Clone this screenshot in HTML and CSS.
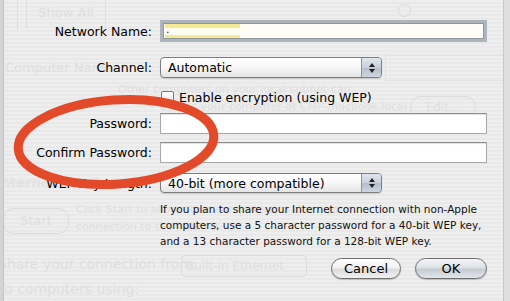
FILE: index.html
```html
<!DOCTYPE html>
<html>
<head>
<meta charset="utf-8">
<link rel="stylesheet" href="styles.css">
</head>
<body>
<div class="screen">
  <div class="behind">
    <div class="tb-sep tb-sep1"></div>
    <div class="tb-btn">Show All</div>
    <div class="tb-search"></div>
    <div class="bg-t cname">Computer Name:</div>
    <div class="bg-box cfield"></div>
    <div class="bg-t other">Other computers on your local subnet can</div>
    <div class="bg-t local">access your computer at CMP-macbook.local</div>
    <div class="bg-btn edit">Edit...</div>
    <div class="bg-t inet">Internet Sharing</div>
    <div class="bg-btn start">Start</div>
    <div class="bg-t click1">Click Start to allow other computers to share your</div>
    <div class="bg-t click2">connection to the Internet.</div>
    <div class="bg-t share">Share your connection from:</div>
    <div class="bg-btn builtin">Built-in Ethernet</div>
    <div class="bg-t tocomp">To computers using:</div>
  </div>
  <div class="left-edge"></div>
  <div class="right-edge"></div>

  <div class="sheet">
    <div class="row r1">
      <div class="label">Network Name:</div>
      <div class="field focus"><span class="sel"></span><span class="caret">.</span></div>
    </div>
    <div class="row r2">
      <div class="label">Channel:</div>
      <div class="popup"><span class="ptext">Automatic</span><span class="arrows"><span class="up"></span><span class="dn"></span></span></div>
    </div>
    <div class="row r3">
      <div class="label"></div>
      <div class="check"><span class="box"></span><span>Enable encryption (using WEP)</span></div>
    </div>
    <div class="row r4">
      <div class="label">Password:</div>
      <div class="field"></div>
    </div>
    <div class="row r5">
      <div class="label">Confirm Password:</div>
      <div class="field"></div>
    </div>
    <div class="row r6">
      <div class="label">WEP Key Length:</div>
      <div class="popup"><span class="ptext">40-bit (more compatible)</span><span class="arrows"><span class="up"></span><span class="dn"></span></span></div>
    </div>
    <div class="row r7">
      <div class="label"></div>
      <p class="desc">If you plan to share your Internet connection with non-Apple computers, use a 5 character password for a 40-bit WEP key, and a 13 character password for a 128-bit WEP key.</p>
    </div>
    <div class="buttons">
      <div class="btn">Cancel</div>
      <div class="btn ok">OK</div>
    </div>
  </div>

  <svg class="ring" width="510" height="301" viewBox="0 0 510 301">
    <ellipse cx="116" cy="142" rx="98" ry="42" fill="none" stroke="#e24a2a" stroke-width="9" transform="rotate(-4 116 142)"/>
  </svg>
</div>
</body>
</html>
```

FILE: styles.css
```css
html, body {
  margin: 0;
  padding: 0;
}
body {
  font-family: "DejaVu Sans", "Liberation Sans", sans-serif;
  background: #ececec;
}
.screen {
  position: relative;
  width: 510px;
  height: 301px;
  overflow: hidden;
  background: repeating-linear-gradient(to bottom, #eeeeee 0px, #eeeeee 2px, #e9e9e9 2px, #e9e9e9 4px);
}
.behind {
  position: absolute;
  inset: 0;
  color: #dfdfdf;
  font-size: 13px;
}
.behind > * {
  position: absolute;
  white-space: nowrap;
}
.tb-sep { top: 0; width: 1px; height: 30px; background: #dedede; }
.tb-sep1 { left: 17px; }
.tb-btn { left: 26px; top: 0; height: 28px; width: 78px; border-left: 1px solid #dedede; border-right: 1px solid #dedede; line-height: 26px; text-align: center; }
.tb-search { left: 398px; top: 4px; width: 11px; height: 11px; border: 1px solid #dadada; border-radius: 50%; }
.bg-t { line-height: 16px; }
.cname { left: 5px; top: 60px; }
.cfield { left: 385px; top: 55px; width: 120px; height: 24px; border: 1px solid #e2e2e2; }
.other { left: 118px; top: 82px; font-size: 11px; }
.local { left: 160px; top: 99px; font-size: 11px; }
.bg-btn { border: 1px solid #dcdcdc; border-radius: 11px; text-align: center; }
.edit { left: 410px; top: 96px; width: 64px; height: 20px; line-height: 20px; font-size: 12px; }
.inet { left: -4px; top: 175px; font-weight: bold; color: #e2e2e2; }
.start { left: 3px; top: 208px; width: 64px; height: 24px; line-height: 24px; }
.click1 { left: 76px; top: 202px; font-size: 11px; }
.click2 { left: 76px; top: 219px; font-size: 11px; }
.share { left: -2px; top: 256px; font-size: 14px; }
.builtin { left: 181px; top: 255px; width: 120px; height: 20px; line-height: 20px; font-size: 12px; border-radius: 4px; text-align: left; padding-left: 4px; }
.tocomp { left: -2px; top: 281px; font-size: 14px; }

.left-edge {
  position: absolute;
  left: 0; top: 0; bottom: 0;
  width: 3px;
  background: #d4d4d4;
  border-right: 1px solid #c4c4c4;
}
.right-edge {
  position: absolute;
  right: 0; top: 0; bottom: 0;
  width: 6px;
  background: #dedede;
  border-left: 1px solid #c8c8c8;
}

.sheet {
  position: relative;
  padding-top: 20px;
  display: flex;
  flex-direction: column;
  font-size: 12.5px;
  color: #000;
}
.row {
  display: flex;
  align-items: center;
  gap: 8px;
}
.label {
  width: 152px;
  flex: none;
  text-align: right;
  white-space: nowrap;
}
.r1 { height: 22px; }
.r2 { height: 21px; margin-top: 15px; }
.r3 { height: 14px; margin-top: 12px; }
.r4 { height: 21px; margin-top: 9px; }
.r5 { height: 21px; margin-top: 8px; }
.r6 { height: 20px; margin-top: 10px; }
.r7 { margin-top: 8px; align-items: flex-start; }

.field {
  box-sizing: border-box;
  width: 327px;
  height: 21px;
  background: #fff;
  border: 1px solid #a8a8a8;
  border-top-color: #8c8c8c;
  box-shadow: inset 0 1px 1px rgba(0,0,0,0.12);
  position: relative;
}
.field.focus {
  height: 22px;
  border: 3px solid #aeb6bd;
  box-shadow: inset 0 0 0 1px #8e969c;
  background: #fffef6;
}
.sel {
  position: absolute;
  left: 2px; top: 1px;
  width: 75px; height: 14px;
  background: linear-gradient(to bottom, #f5ea92 0, #f5ea92 4px, #fffdf0 4px, #fffdf0 11px, #f5ea92 11px);
}
.caret {
  position: absolute;
  left: 3px; top: 0px;
  font-size: 11px;
  line-height: 14px;
  color: #222;
}

.popup {
  box-sizing: border-box;
  width: 222px;
  height: 100%;
  border: 1px solid #7d7d7d;
  border-radius: 4px;
  background: linear-gradient(to bottom, #ffffff 0%, #f7f7f7 50%, #e4e4e4 100%);
  display: flex;
  align-items: center;
  justify-content: space-between;
  overflow: hidden;
  box-shadow: 0 1px 1px rgba(0,0,0,0.15);
}
.ptext {
  padding-left: 7px;
  white-space: nowrap;
}
.arrows {
  width: 19px;
  height: 100%;
  border-left: 1px solid #8a94a0;
  background: linear-gradient(to bottom, #dfe6ee 0%, #c7d1dc 50%, #b4bfcb 51%, #cdd6e0 100%);
  display: flex;
  flex-direction: column;
  align-items: center;
  justify-content: center;
  gap: 2px;
}
.up, .dn {
  width: 0; height: 0;
  border-left: 3px solid transparent;
  border-right: 3px solid transparent;
}
.up { border-bottom: 4px solid #222; }
.dn { border-top: 4px solid #222; }

.check {
  display: flex;
  align-items: center;
  gap: 5px;
  margin-left: 1px;
  white-space: nowrap;
}
.box {
  box-sizing: border-box;
  width: 13px;
  height: 13px;
  border: 1px solid #7a7a7a;
  border-radius: 2px;
  background: linear-gradient(to bottom, #ffffff, #e6e6e6);
}

.desc {
  margin: 0;
  width: 330px;
  font-size: 10.5px;
  line-height: 16px;
  color: #111;
}

.buttons {
  display: flex;
  justify-content: flex-end;
  gap: 14px;
  margin-top: 9px;
  padding-right: 23px;
}
.btn {
  box-sizing: border-box;
  height: 21px;
  width: 70px;
  border: 1px solid #6e6e6e;
  border-radius: 11px;
  text-align: center;
  line-height: 19px;
  font-size: 13px;
  background: linear-gradient(to bottom, #ffffff 0%, #f2f2f2 45%, #dcdcdc 55%, #f0f0f0 100%);
  box-shadow: 0 1px 1px rgba(0,0,0,0.2);
}
.btn.ok {
  width: 72px;
  background: linear-gradient(to bottom, #f4f6f8 0%, #dde2e7 45%, #c4cbd2 55%, #e1e6ea 100%);
}

.ring {
  position: absolute;
  left: 0;
  top: 0;
  pointer-events: none;
}
```
